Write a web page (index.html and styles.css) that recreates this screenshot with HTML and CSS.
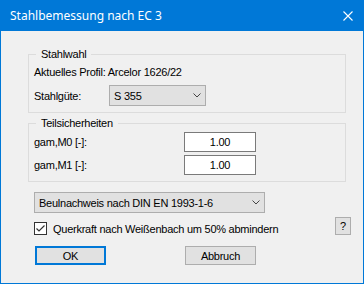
FILE: index.html
```html
<!DOCTYPE html>
<html>
<head>
<meta charset="utf-8">
<title>Stahlbemessung nach EC 3</title>
<link rel="stylesheet" href="styles.css">
</head>
<body>
<div class="window">
	<div class="titlebar">
		<span class="title">Stahlbemessung nach EC 3</span>
		<svg class="close" width="10" height="10" viewBox="0 0 10 10"><path d="M0.5 0.5 L9.5 9.5 M9.5 0.5 L0.5 9.5" stroke="#fff" stroke-width="1.1" fill="none"/></svg>
	</div>
	<div class="content">
		<fieldset class="group group-steel">
			<legend>Stahlwahl</legend>
			<div class="row row-profile">Aktuelles Profil: Arcelor 1626/22</div>
			<div class="row row-grade">
				<span class="label label-grade">Stahlgüte:</span>
				<div class="combo combo-grade">
					<span>S 355</span>
					<svg class="chev" width="8" height="5" viewBox="0 0 8 5"><polyline points="0.5,0.5 4,4 7.5,0.5" stroke="#444" fill="none"/></svg>
				</div>
			</div>
		</fieldset>
		<fieldset class="group group-safety">
			<legend>Teilsicherheiten</legend>
			<div class="row row-input">
				<span class="label label-gam">gam,M0 [-]:</span>
				<div class="field">1.00</div>
			</div>
			<div class="row row-input row-input2">
				<span class="label label-gam">gam,M1 [-]:</span>
				<div class="field">1.00</div>
			</div>
		</fieldset>
		<div class="options">
			<div class="combo combo-buckling">
				<span>Beulnachweis nach DIN EN 1993-1-6</span>
				<svg class="chev" width="8" height="5" viewBox="0 0 8 5"><polyline points="0.5,0.5 4,4 7.5,0.5" stroke="#444" fill="none"/></svg>
			</div>
			<div class="row row-check">
				<div class="checkline">
					<span class="check"><svg width="11" height="11" viewBox="0 0 11 11"><polyline points="1.5,5.5 4,8 9.5,2.5" stroke="#333" stroke-width="1.2" fill="none"/></svg></span>
					<span class="check-text">Querkraft nach Weißenbach um 50% abmindern</span>
				</div>
				<div class="btn btn-help">?</div>
			</div>
			<div class="row row-buttons">
				<div class="btn btn-ok">OK</div>
				<div class="btn btn-cancel">Abbruch</div>
			</div>
		</div>
	</div>
</div>
</body>
</html>
```

FILE: styles.css
```css
*{margin:0;padding:0;box-sizing:border-box;}
body{background:#fff;}
.window{width:364px;height:284px;background:#0078d7;display:flex;flex-direction:column;}
.titlebar{height:31px;display:flex;align-items:center;padding:0 11px 0 10px;color:#fff;
	font:12px "Noto Sans","Liberation Sans",sans-serif;}
.close{margin-left:auto;}
.content{flex:1;margin:0 1px 1px;background:#f0f0f0;padding:16px 0 0 27px;
	font:11px "Liberation Sans",Arial,sans-serif;letter-spacing:-0.25px;color:#000;}
.group{border:1px solid #dcdcdc;width:318px;min-width:0;padding:0 0 6px 5px;}
.group legend{margin-left:2px;padding:0 5px;line-height:14px;}
.group-safety{margin-top:3px;}
.row{display:flex;align-items:center;}
.row-profile{height:22px;}
.row-grade{margin-top:2px;}
.label-grade{width:75px;}
.label-gam{width:150px;}
.combo{display:flex;align-items:center;justify-content:space-between;height:21px;
	background:#e1e1e1;border:1px solid #adadad;padding:0 4px 0 4px;}
.combo-grade{width:97px;}
.row-input{margin-top:2px;}
.row-input2{margin-top:3px;}
.field{width:72px;height:20px;background:#fff;border:1px solid #7a7a7a;text-align:center;line-height:18px;}
.options{padding:10px 12px 0 6px;}
.combo-buckling{width:231px;}
.row-check{margin-top:4px;height:18px;align-items:flex-end;}
.checkline{display:flex;align-items:center;}
.check{width:13px;height:13px;border:1px solid #333;background:#fff;display:flex;align-items:center;justify-content:center;}
.check-text{margin-left:6px;}
.btn{background:#e1e1e1;border:1px solid #adadad;display:flex;align-items:center;justify-content:center;}
.btn-help{margin-left:auto;width:16px;height:18px;}
.row-buttons{margin-top:11px;}
.btn-ok{margin-left:1px;width:71px;height:19px;border:2px solid #0078d7;}
.btn-cancel{margin-left:79px;width:71px;height:19px;}
```
